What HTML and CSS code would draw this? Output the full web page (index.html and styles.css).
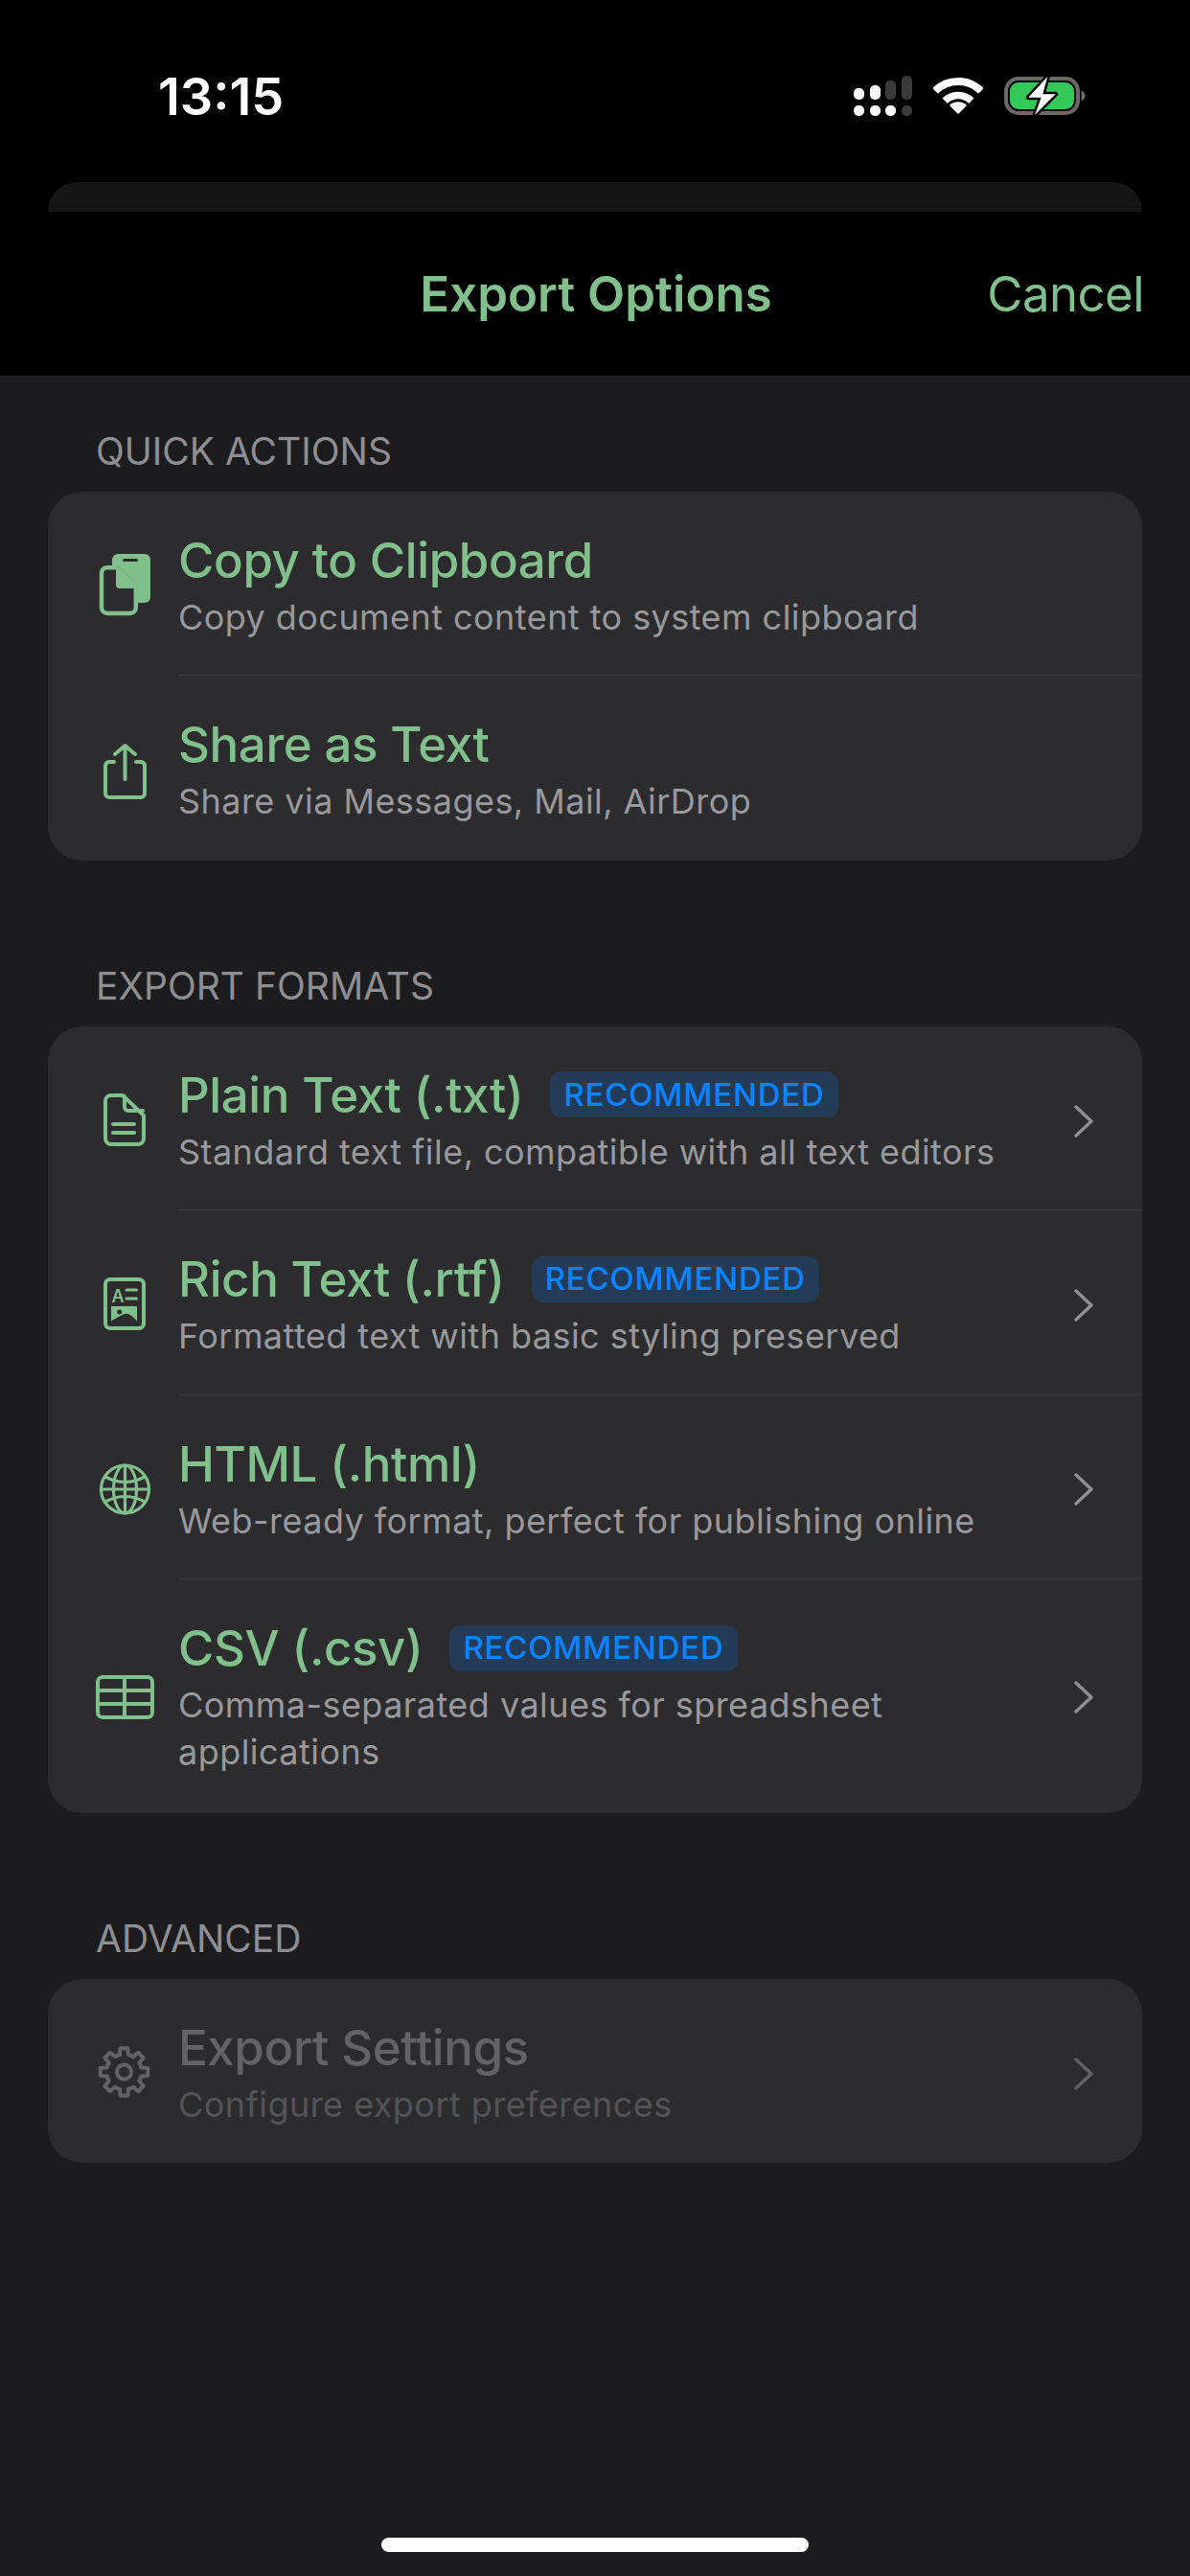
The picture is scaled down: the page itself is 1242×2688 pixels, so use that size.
FILE: index.html
```html
<!DOCTYPE html>
<html lang="en">

<head>
    <meta charset="UTF-8">
    <meta name="viewport" content="width=device-width, initial-scale=1.0">
    <title>Export Options</title>
    <link rel="stylesheet" href="styles.css">
</head>

<body>
    <!-- Status bar -->
    <div class="status">
        <span class="clock">13:15</span>
        <div class="status-icons">
            <svg width="61" height="42" viewBox="0 0 61 42">
                <rect x="0" y="31" width="11" height="11" rx="5" fill="#fff" />
                <rect x="17" y="31" width="11" height="11" rx="5" fill="#fff" />
                <rect x="33" y="31" width="11" height="11" rx="5" fill="#fff" />
                <rect x="50" y="31" width="11" height="11" rx="5" fill="#3a3a3a" />
                <rect x="0" y="13" width="11" height="12" rx="5" fill="#fff" />
                <rect x="17" y="10" width="11" height="15" rx="5" fill="#fff" />
                <rect x="33" y="5" width="11" height="20" rx="5" fill="#3a3a3a" />
                <rect x="50" y="0" width="11" height="25" rx="5" fill="#3a3a3a" />
            </svg>
            <svg width="52" height="38" viewBox="0 0 52 38">
                <path d="M2 14A34 34 0 0 1 50 14" fill="none" stroke="#fff" stroke-width="8" />
                <path d="M12.2 24.2A19.5 19.5 0 0 1 39.8 24.2" fill="none" stroke="#fff" stroke-width="7.7" />
                <path d="M26 38L17 29A12.7 12.7 0 0 1 35 29Z" fill="#fff" />
            </svg>
            <svg width="85" height="44" viewBox="0 0 85 44">
                <rect x="2" y="4" width="75" height="36" rx="13" fill="none" stroke="#6a6a6a" stroke-width="4" />
                <rect x="6" y="8" width="67" height="28" rx="9" fill="#34c759" />
                <path d="M80.5 16.5C83 17.5 84.6 19.5 84.6 22S83 26.5 80.5 27.5Z" fill="#6a6a6a" />
                <path d="M45.3 2L25.3 23.7H38.7L32 42L53.7 20.3H40.3Z" fill="#fff" stroke="#000" stroke-width="5"
                    stroke-linejoin="round" paint-order="stroke" />
            </svg>
        </div>
    </div>

    <!-- Edge of the sheet underneath -->
    <div class="sheet-edge"></div>

    <!-- Nav bar -->
    <div class="navbar">
        <span></span>
        <span class="nav-title">Export Options</span>
        <span class="nav-cancel">Cancel</span>
    </div>

    <div class="content">
        <div class="section-label">QUICK ACTIONS</div>
        <div class="card">
            <div class="row">
                <div class="row-icon">
                    <svg class="icon" viewBox="0 0 80 80">
                        <rect class="solid" x="27" y="9" width="40" height="51" rx="6" />
                        <rect class="cut" x="38" y="14" width="16" height="3" rx="1.5" />
                        <path class="cut-line" d="M22 23.2H32L51.8 43V65A6 6 0 0 1 45.8 71H22A6 6 0 0 1 16 65V29.200A6 6 0 0 1 22 23.2Z" />
                        <path class="line filled" d="M33 25V41A2 2 0 0 0 35 43H51Z" />
                        <path class="seam" d="M33 21L54 42" />
                    </svg>
                </div>
                <div class="row-body">
                    <div class="row-text">
                        <div class="row-title">Copy to Clipboard</div>
                        <div class="row-sub">Copy document content to system clipboard</div>
                    </div>
                </div>
            </div>
            <div class="row">
                <div class="row-icon">
                    <svg class="icon" viewBox="0 0 80 80">
                        <path class="line" d="M29 33H24A4 4 0 0 0 20 37V66A4 4 0 0 0 24 70H57A4 4 0 0 0 61 66V37A4 4 0 0 0 57 33H52" />
                        <path class="line" d="M40.500 51V17M30 25L40.500 16L51 25" />
                    </svg>
                </div>
                <div class="row-body">
                    <div class="row-text">
                        <div class="row-title">Share as Text</div>
                        <div class="row-sub">Share via Messages, Mail, AirDrop</div>
                    </div>
                </div>
            </div>
        </div>

        <div class="section-label">EXPORT FORMATS</div>
        <div class="card">
            <div class="row">
                <div class="row-icon">
                    <svg class="icon" viewBox="0 0 80 80">
                        <path class="line" d="M26 16H38L60 37V61A6 6 0 0 1 54 67H26A6 6 0 0 1 20 61V22A6 6 0 0 1 26 16Z" />
                        <path class="line" d="M40 17V28A4 4 0 0 0 44 32H59M28 46H50M28 55H50" />
                    </svg>
                </div>
                <div class="row-body">
                    <div class="row-text">
                        <div class="row-title">Plain Text (.txt)<span class="badge">RECOMMENDED</span></div>
                        <div class="row-sub">Standard text file, compatible with all text editors</div>
                    </div>
                    <svg class="chevron" viewBox="0 0 20 34"><path d="M2 2L18 17L2 32" /></svg>
                </div>
            </div>
            <div class="row">
                <div class="row-icon">
                    <svg class="icon" viewBox="0 0 80 80">
                        <rect class="line" x="20" y="16" width="40" height="51" rx="5" />
                        <text class="glyph" x="33" y="39.500" text-anchor="middle">A</text>
                        <path class="line thin" d="M42 27H52.500M42 36H52.500" />
                        <path class="solid" d="M26 44H53V59.500Q45 50 40 52Q33 55 26 59.500Z" />
                        <circle class="cut" cx="34.700" cy="50" r="2.500" />
                    </svg>
                </div>
                <div class="row-body">
                    <div class="row-text">
                        <div class="row-title">Rich Text (.rtf)<span class="badge">RECOMMENDED</span></div>
                        <div class="row-sub">Formatted text with basic styling preserved</div>
                    </div>
                    <svg class="chevron" viewBox="0 0 20 34"><path d="M2 2L18 17L2 32" /></svg>
                </div>
            </div>
            <div class="row">
                <div class="row-icon">
                    <svg class="icon" viewBox="0 0 80 80">
                        <circle class="line mid" cx="40.500" cy="42" r="25" />
                        <ellipse class="line mid" cx="40.500" cy="42" rx="12" ry="25" />
                        <path class="line mid" d="M40.500 17V67M15.500 42H65.500M20 29Q40.500 40 61 29M20 55Q40.500 44 61 55" />
                    </svg>
                </div>
                <div class="row-body">
                    <div class="row-text">
                        <div class="row-title">HTML (.html)</div>
                        <div class="row-sub">Web-ready format, perfect for publishing online</div>
                    </div>
                    <svg class="chevron" viewBox="0 0 20 34"><path d="M2 2L18 17L2 32" /></svg>
                </div>
            </div>
            <div class="row">
                <div class="row-icon">
                    <svg class="icon" viewBox="0 0 80 80">
                        <rect class="line" x="12" y="20" width="57" height="42" rx="5" />
                        <path class="line" d="M12 34H69M12 48H69M40 20V62" />
                    </svg>
                </div>
                <div class="row-body tall">
                    <div class="row-text">
                        <div class="row-title">CSV (.csv)<span class="badge">RECOMMENDED</span></div>
                        <div class="row-sub">Comma-separated values for spreadsheet applications</div>
                    </div>
                    <svg class="chevron" viewBox="0 0 20 34"><path d="M2 2L18 17L2 32" /></svg>
                </div>
            </div>
        </div>

        <div class="section-label">ADVANCED</div>
        <div class="card">
            <div class="row disabled">
                <div class="row-icon">
                    <svg class="icon" viewBox="0 0 80 80">
                        <defs>
                            <path id="gearTooth" d="M-4.480 -17.950L-3.910 -24.700H3.910L4.480 -17.950A18.500 18.500 0 0 1 9.530 -15.860" />
                        </defs>
                        <g class="line" transform="translate(39.500 41)">
                            <use href="#gearTooth" />
                            <use href="#gearTooth" transform="rotate(45)" />
                            <use href="#gearTooth" transform="rotate(90)" />
                            <use href="#gearTooth" transform="rotate(135)" />
                            <use href="#gearTooth" transform="rotate(180)" />
                            <use href="#gearTooth" transform="rotate(225)" />
                            <use href="#gearTooth" transform="rotate(270)" />
                            <use href="#gearTooth" transform="rotate(315)" />
                            <circle r="7.500" />
                        </g>
                    </svg>
                </div>
                <div class="row-body">
                    <div class="row-text">
                        <div class="row-title">Export Settings</div>
                        <div class="row-sub">Configure export preferences</div>
                    </div>
                    <svg class="chevron" viewBox="0 0 20 34"><path d="M2 2L18 17L2 32" /></svg>
                </div>
            </div>
        </div>

        <div class="home-bar"></div>
    </div>
</body>

</html>
```

FILE: styles.css
```css
* {
    box-sizing: border-box;
}

body {
    margin: 0;
    height: 2688px;
    display: flex;
    flex-direction: column;
    background-color: #000;
    font-family: Inter, "Liberation Sans", sans-serif;
    overflow: hidden;
}

/* Status bar */
.status {
    height: 190px;
    padding: 60px 109px 50px 165px;
    display: flex;
    align-items: center;
    justify-content: space-between;
}

.clock {
    color: #fff;
    font-size: 54px;
    font-weight: 600;
}

.status-icons {
    display: flex;
    align-items: center;
    gap: 22px;
}

.status-icons svg {
    display: block;
}

.sheet-edge {
    height: 31px;
    margin: 0 50px;
    background-color: #161617;
    border-radius: 36px 36px 0 0;
}

/* Nav bar */
.navbar {
    height: 172px;
    padding: 0 48px 0 50px;
    display: grid;
    grid-template-columns: 1fr auto 1fr;
    align-items: center;
    color: #81bf8d;
    font-size: 51px;
    border-bottom: 1px solid #262628;
}

.nav-title {
    font-weight: 600;
}

.nav-cancel {
    text-align: right;
    letter-spacing: -0.6px;
}

/* Page content */
.content {
    flex: 1;
    display: flex;
    flex-direction: column;
    background-color: #1c1c1e;
    padding: 0 50px;
}

.section-label {
    margin: 54px 0 18px 50px;
    color: #8e8e93;
    font-size: 39px;
    line-height: 48px;
}

.card + .section-label {
    margin-top: 107px;
}

.card {
    background-color: #2c2c2e;
    border-radius: 36px;
    overflow: hidden;
}

.row {
    display: flex;
    align-items: stretch;
}

.row-icon {
    width: 136px;
    padding-left: 40px;
    display: flex;
    align-items: center;
    flex-shrink: 0;
}

.icon {
    width: 80px;
    height: 80px;
    display: block;
}

.line {
    fill: none;
    stroke: #81bf8d;
    stroke-width: 4;
    stroke-linecap: round;
    stroke-linejoin: round;
}

.line.thin {
    stroke-width: 3;
}

.line.mid {
    stroke-width: 3.2;
}

.line.filled {
    fill: #81bf8d;
}

.solid {
    fill: #81bf8d;
}

.cut {
    fill: #2c2c2e;
}

.cut-line {
    fill: #2c2c2e;
    stroke: #81bf8d;
    stroke-width: 4.500;
    stroke-linejoin: round;
}

/* Thin edge where the front page crosses the back one */
.seam {
    fill: none;
    stroke: #6fa67b;
    stroke-width: 0.8;
}

.glyph {
    fill: #81bf8d;
    font-size: 18px;
    font-weight: 600;
}

.row-body {
    flex: 1;
    min-width: 0;
    padding: 41px 51px 35px 0;
    display: flex;
    align-items: center;
    border-bottom: 1px solid #3a3a3c;
}

.row-body.tall {
    padding-bottom: 37px;
}

.row:last-child .row-body {
    border-bottom-color: transparent;
}

.row-text {
    flex: 1;
    min-width: 0;
    padding-right: 32px;
}

.row-title {
    color: #81bf8d;
    font-size: 51px;
    font-weight: 500;
    line-height: 61px;
    letter-spacing: -0.4px;
    display: flex;
    align-items: center;
}

.row-sub {
    margin-top: 5px;
    color: #98989d;
    font-size: 36px;
    line-height: 49.400px;
    letter-spacing: 0.45px;
}

.badge {
    margin-left: 28px;
    padding: 0 14px;
    height: 48px;
    display: flex;
    align-items: center;
    border-radius: 12px;
    background-color: #243b58;
    color: #0a84ff;
    font-size: 33px;
    font-weight: 500;
    letter-spacing: 0.8px;
}

.chevron {
    width: 20px;
    height: 34px;
    flex-shrink: 0;
    fill: none;
    stroke: #8e8e93;
    stroke-width: 3.500;
    stroke-linecap: round;
    stroke-linejoin: round;
}

/* Disabled row is all grey */
.disabled .row-title,
.disabled .line {
    color: #636366;
    stroke: #636366;
}

.disabled .row-sub {
    color: #545458;
}

.disabled .chevron {
    stroke: #636366;
}

.home-bar {
    width: 446px;
    height: 15px;
    margin: auto auto 25px;
    background-color: #fff;
    border-radius: 8px;
}
```
